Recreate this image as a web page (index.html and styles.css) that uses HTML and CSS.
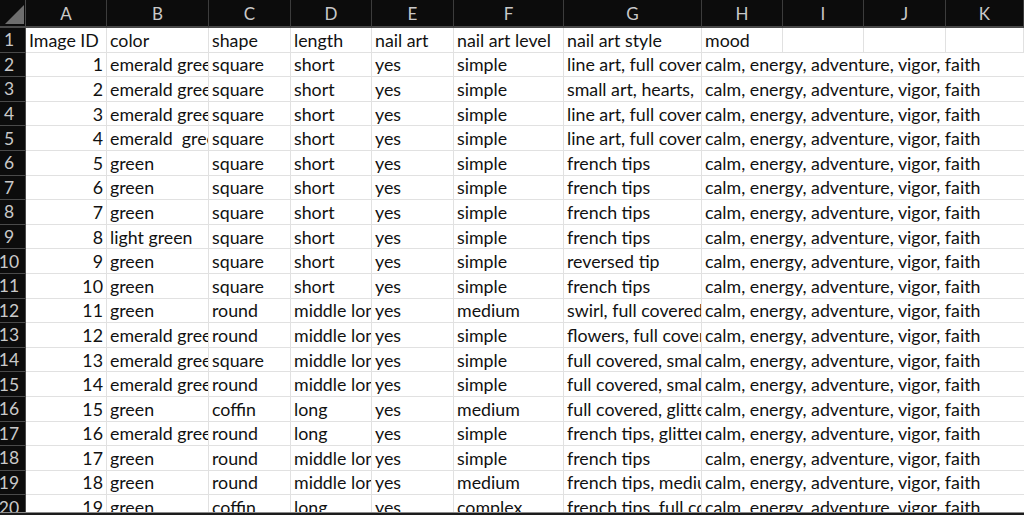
FILE: index.html
```html
<!DOCTYPE html>
<html>
<head>
    <title>nails.xlsx</title>
    <meta charset="UTF-8">
    <link rel="stylesheet" href="styles.css">
</head>
<body>
    <div class="window">
        <div class="sheet" id="sheet">
            <div class="corner"><span class="corner-mark"></span></div>
            <div class="col-head">A</div>
            <div class="col-head">B</div>
            <div class="col-head">C</div>
            <div class="col-head">D</div>
            <div class="col-head">E</div>
            <div class="col-head">F</div>
            <div class="col-head">G</div>
            <div class="col-head">H</div>
            <div class="col-head">I</div>
            <div class="col-head">J</div>
            <div class="col-head">K</div>

            <div class="row-head">1</div>
            <div class="cell">Image ID</div>
            <div class="cell">color</div>
            <div class="cell">shape</div>
            <div class="cell">length</div>
            <div class="cell">nail art</div>
            <div class="cell">nail art level</div>
            <div class="cell">nail art style</div>
            <div class="cell">mood</div>
            <div class="cell"></div>
            <div class="cell"></div>
            <div class="cell"></div>
        </div>
    </div>

    <script>
        const mood = 'calm, energy, adventure, vigor, faith';

        // id, color, shape, length, nail art, level, style
        const rows = [
            [1, 'emerald green', 'square', 'short', 'yes', 'simple', 'line art, full covered'],
            [2, 'emerald green', 'square', 'short', 'yes', 'simple', 'small art, hearts,&nbsp;&nbsp; full covered'],
            [3, 'emerald green', 'square', 'short', 'yes', 'simple', 'line art, full covered'],
            [4, 'emerald&nbsp; green', 'square', 'short', 'yes', 'simple', 'line art, full covered'],
            [5, 'green', 'square', 'short', 'yes', 'simple', 'french tips'],
            [6, 'green', 'square', 'short', 'yes', 'simple', 'french tips'],
            [7, 'green', 'square', 'short', 'yes', 'simple', 'french tips'],
            [8, 'light green', 'square', 'short', 'yes', 'simple', 'french tips'],
            [9, 'green', 'square', 'short', 'yes', 'simple', 'reversed tip'],
            [10, 'green', 'square', 'short', 'yes', 'simple', 'french tips'],
            [11, 'green', 'round', 'middle long', 'yes', 'medium', 'swirl, full covered'],
            [12, 'emerald green', 'round', 'middle long', 'yes', 'simple', 'flowers, full covered'],
            [13, 'emerald green', 'square', 'middle long', 'yes', 'simple', 'full covered, small art'],
            [14, 'emerald green', 'round', 'middle long', 'yes', 'simple', 'full covered, small art'],
            [15, 'green', 'coffin', 'long', 'yes', 'medium', 'full covered, glitter'],
            [16, 'emerald green', 'round', 'long', 'yes', 'simple', 'french tips, glitter'],
            [17, 'green', 'round', 'middle long', 'yes', 'simple', 'french tips'],
            [18, 'green', 'round', 'middle long', 'yes', 'medium', 'french tips, medium art'],
            [19, 'green', 'coffin', 'long', 'yes', 'complex', 'french tips, full covered']
        ];

        const sheet = document.getElementById('sheet');
        sheet.insertAdjacentHTML('beforeend', rows.map((r, i) => `
            <div class="row-head">${i + 2}</div>
            <div class="cell num">${r[0]}</div>
            ${r.slice(1).map(v => `<div class="cell">${v}</div>`).join('')}
            <div class="cell wide">${mood}</div>
        `).join(''));
    </script>
</body>
</html>
```

FILE: styles.css
```css
html, body {
    margin: 0;
    padding: 0;
    background-color: #1c1c1c;
    overflow: hidden;
}
.window {
    height: 512px;
    overflow: hidden;
    border-bottom: 1px solid #8a8a8a;
    background-color: white;
}
.sheet {
    display: grid;
    grid-template-columns: 26px 81px 102px 82px 81px 82px 110px 138px 81px 81px 82px 1fr;
    grid-template-rows: 28px;
    grid-auto-rows: 24.6px;
    font-family: Lato, "Open Sans", sans-serif;
    font-size: 17.8px;
    color: #111;
}
.corner {
    background-color: #0c0c0c;
    border-right: 1px solid #4a4a4a;
    border-bottom: 2px solid #4a4a4a;
    position: relative;
}
.corner-mark {
    position: absolute;
    left: 5px;
    top: 5px;
    width: 0;
    height: 0;
    border-left: 19px solid transparent;
    border-bottom: 19px solid #6e6e6e;
}
.col-head {
    background-color: #0c0c0c;
    color: #c9c9c9;
    border-right: 1px solid #3c3c3c;
    border-bottom: 2px solid #4a4a4a;
    display: flex;
    align-items: center;
    justify-content: center;
    font-size: 17px;
}
.col-head:last-child {
    border-right: none;
}
.row-head {
    background-color: #0c0c0c;
    color: #c9c9c9;
    border-right: 1px solid #4a4a4a;
    border-bottom: 1px solid #4a4a4a;
    display: flex;
    align-items: center;
    justify-content: center;
    padding-right: 7px;
    font-size: 17.5px;
}
.cell {
    border-right: 1px solid #e1e1e1;
    border-bottom: 1px solid #e1e1e1;
    padding: 0 3px;
    white-space: nowrap;
    overflow: hidden;
    display: flex;
    align-items: center;
}
.num {
    justify-content: flex-end;
}
.wide {
    grid-column: span 4;
    border-right: none;
}
```
